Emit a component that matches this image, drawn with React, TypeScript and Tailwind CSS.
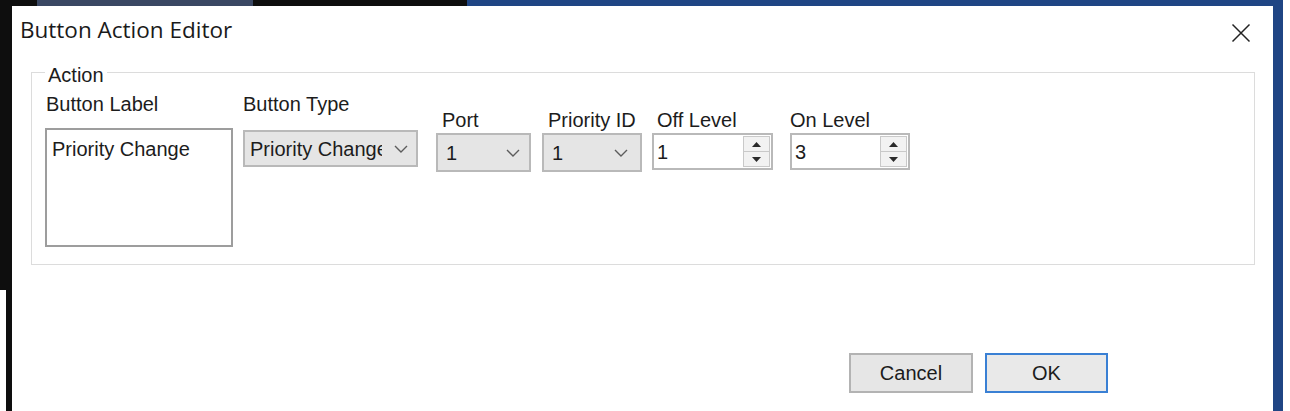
const ui = "font-['Liberation_Sans',Arial,sans-serif] text-[20px] leading-[22px] text-[#1c1c1c]";

const Chevron = () => (
  <svg width="14" height="8" viewBox="0 0 14 8" className="shrink-0">
    <polyline points="1,1 7,7 13,1" fill="none" stroke="#5c5c5c" strokeWidth="1.4" />
  </svg>
);

const Combo = ({ value, className }: { value: string; className: string }) => (
  <div className={`flex items-center border-2 border-[#b9b9b9] bg-[#e5e5e5] ${className}`}>
    <span className="min-w-0 flex-1 overflow-hidden whitespace-nowrap">{value}</span>
    <Chevron />
  </div>
);

const Spin = ({ value, className }: { value: string; className: string }) => (
  <div className={`flex border-2 border-[#b9b9b9] bg-white ${className}`}>
    <div className="flex flex-1 items-center pl-[3px]">{value}</div>
    <div className="my-[1px] mr-[1px] flex w-[27px] flex-col border border-[#c9c9c9] bg-[#f2f2f2]">
      <div className="flex flex-1 items-center justify-center border-b border-[#c9c9c9]">
        <svg width="9" height="5" viewBox="0 0 9 5">
          <polygon points="0,5 4.5,0 9,5" fill="#2a2a2a" />
        </svg>
      </div>
      <div className="flex flex-1 items-center justify-center">
        <svg width="9" height="5" viewBox="0 0 9 5">
          <polygon points="0,0 4.5,5 9,0" fill="#2a2a2a" />
        </svg>
      </div>
    </div>
  </div>
);

export default function App() {
  return (
    <div className="flex h-[411px] w-[1290px] flex-col overflow-hidden bg-white">
      {/* window chrome behind the dialog */}
      <div className="flex h-[6px] shrink-0">
        <div className="w-[37px] bg-[#0e0e0e]" />
        <div className="w-[216px] bg-[#3a4763]" />
        <div className="w-[214px] bg-[#0e0e0e]" />
        <div className="w-[816px] bg-[#1f4584]" />
        <div className="flex-1 bg-white" />
      </div>

      <div className="flex flex-1">
        <div className="flex w-[12px] flex-col">
          <div className="h-[284px] bg-[#0e0e0e]" />
          <div className="flex flex-1">
            <div className="w-[6px] bg-white" />
            <div className="flex-1 bg-[#0e0e0e]" />
          </div>
        </div>

        {/* dialog */}
        <div className={`flex flex-1 flex-col bg-white ${ui}`}>
          <div className="flex h-[52px] items-start justify-between pl-[8px] pr-[22px] pt-[10px]">
            <div className="font-['Open_Sans',sans-serif] text-[22.5px] leading-[28px] text-[#1a1a1a]">
              Button Action Editor
            </div>
            <svg width="20" height="20" viewBox="0 0 20 20" className="mt-[7px]">
              <path d="M1.5 1.5 L18.5 18.5 M18.5 1.5 L1.5 18.5" stroke="#222" strokeWidth="1.5" fill="none" />
            </svg>
          </div>

          <fieldset className="ml-[19px] mr-[18px] border border-[#dcdcdc] pb-[17px] pl-[13px]">
            <legend className="ml-0 px-[3px] pt-[6px] leading-[22px]">Action</legend>
            <div className="flex items-start">
              <div className="mt-[7px] flex w-[188px] flex-col">
                <div className="pl-[1px]">Button Label</div>
                <div className="mt-[13px] h-[119px] border-2 border-[#9d9d9d] bg-white pl-[5px] pt-[8px]">
                  Priority Change
                </div>
              </div>

              <div className="ml-[10px] mt-[7px] flex flex-col">
                <div>Button Type</div>
                <Combo value="Priority Change" className="mt-[15px] h-[37px] w-[175px] pl-[5px] pr-[8px] [&>span]:mr-[12px]" />
              </div>

              <div className="ml-[18px] mt-[23px] flex flex-col">
                <div className="pl-[6px]">Port</div>
                <Combo value="1" className="mt-[2px] h-[39px] w-[95px] pl-[8px] pr-[9px]" />
              </div>

              <div className="ml-[11px] mt-[23px] flex flex-col">
                <div className="pl-[6px]">Priority ID</div>
                <Combo value="1" className="mt-[2px] h-[39px] w-[100px] pl-[8px] pr-[12px]" />
              </div>

              <div className="ml-[10px] mt-[23px] flex flex-col">
                <div className="pl-[5px]">Off Level</div>
                <Spin value="1" className="mt-[2px] h-[37px] w-[121px]" />
              </div>

              <div className="ml-[17px] mt-[23px] flex flex-col">
                <div>On Level</div>
                <Spin value="3" className="mt-[2px] h-[37px] w-[120px]" />
              </div>
            </div>
          </fieldset>

          <div className="mt-[88px] flex justify-end gap-[12px] pr-[165px]">
            <button className="h-[40px] w-[124px] border-2 border-[#b3b3b3] bg-[#e6e6e6]">Cancel</button>
            <button className="h-[40px] w-[123px] border-2 border-[#3a80d4] bg-[#e9e9e9]">OK</button>
          </div>
        </div>

        <div className="w-[10px] bg-[#1f4584]" />
        <div className="w-[7px] bg-white" />
      </div>
    </div>
  );
}
